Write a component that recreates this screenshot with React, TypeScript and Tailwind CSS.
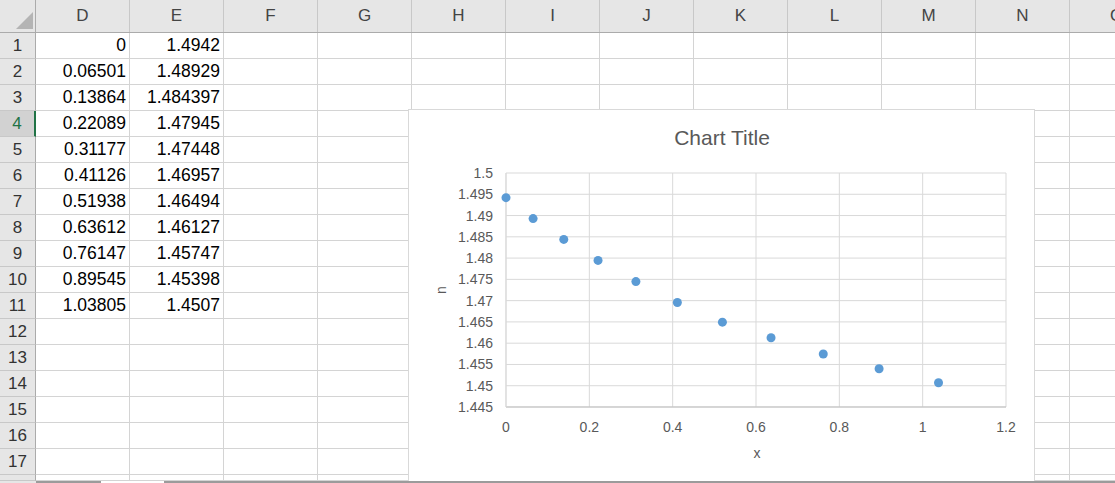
import React from "react";

const columns = ["D", "E", "F", "G", "H", "I", "J", "K", "L", "M", "N", "O"];

// values in columns D and E, rows 1..11
const data: [string, string][] = [
  ["0", "1.4942"],
  ["0.06501", "1.48929"],
  ["0.13864", "1.484397"],
  ["0.22089", "1.47945"],
  ["0.31177", "1.47448"],
  ["0.41126", "1.46957"],
  ["0.51938", "1.46494"],
  ["0.63612", "1.46127"],
  ["0.76147", "1.45747"],
  ["0.89545", "1.45398"],
  ["1.03805", "1.4507"],
];

const SELECTED_ROW = 4;

const HeaderRow = () => (
  <div className="flex h-[33px] shrink-0 bg-[#e6e6e6] border-b border-[#ababab]">
    <div className="relative w-[36px] shrink-0 border-r border-[#ababab]">
      <svg className="absolute left-0 top-0" width="36" height="32">
        <polygon points="16,29 33,29 33,12" fill="#b4b4b4" />
      </svg>
    </div>
    {columns.map((c) => (
      <div
        key={c}
        className="w-[94px] shrink-0 border-r border-[#c8c8c8] flex items-center justify-center text-[17px] text-[#444]"
      >
        {c}
      </div>
    ))}
  </div>
);

const Row = ({ n, height = 26 }: { n: number; height?: number }) => {
  const vals = data[n - 1];
  const selected = n === SELECTED_ROW;
  return (
    <div className="flex shrink-0" style={{ height }}>
      <div
        className={
          selected
            ? "w-[36px] shrink-0 bg-[#d2d2d2] border-r-2 border-[#217346] border-b border-b-[#c8c8c8] flex items-center justify-center text-[17px] text-[#217346]"
            : "w-[36px] shrink-0 bg-[#e6e6e6] border-r border-[#ababab] border-b border-b-[#c8c8c8] flex items-center justify-center text-[17px] text-[#333]"
        }
      >
        {height >= 20 ? n : ""}
      </div>
      {columns.map((c, i) => (
        <div
          key={c}
          className="w-[94px] shrink-0 border-r border-b border-[#d4d4d4] flex items-center justify-end pr-[3px] text-[17.5px] text-black"
        >
          {vals && i < 2 ? vals[i] : ""}
        </div>
      ))}
    </div>
  );
};

// chart geometry (relative to chart box)
const PL = 97;
const PT = 63;
const PR = 597;
const PB = 297;
const xs = (x: number) => PL + (x / 1.2) * (PR - PL);
const ys = (y: number) => PB - ((y - 1.445) / 0.055) * (PB - PT);

const yTicks = ["1.445", "1.45", "1.455", "1.46", "1.465", "1.47", "1.475", "1.48", "1.485", "1.49", "1.495", "1.5"];
const xTicks = ["0", "0.2", "0.4", "0.6", "0.8", "1", "1.2"];

const Chart = () => (
  <div className="absolute left-[408px] top-[109px] w-[627px] h-[372px] bg-white border border-b-0 border-[#d9d9d9]">
    <svg width="625" height="372" className="block" style={{ fontFamily: '"Liberation Sans", Arial, sans-serif' }}>
      <text x="313" y="35" textAnchor="middle" fontSize="21" fill="#595959">
        Chart Title
      </text>
      {yTicks.map((t) => {
        const y = ys(parseFloat(t));
        return (
          <g key={t}>
            <line x1={PL} x2={PR} y1={y} y2={y} stroke="#d9d9d9" strokeWidth="1" />
            <text x={PL - 13} y={y + 5} textAnchor="end" fontSize="14" fill="#595959">
              {t}
            </text>
          </g>
        );
      })}
      {xTicks.map((t) => {
        const x = xs(parseFloat(t));
        return (
          <g key={t}>
            <line x1={x} x2={x} y1={PT} y2={PB} stroke="#d9d9d9" strokeWidth="1" />
            <text x={x} y={PB + 25} textAnchor="middle" fontSize="14" fill="#595959">
              {t}
            </text>
          </g>
        );
      })}
      <line x1={PL} x2={PR} y1={PB} y2={PB} stroke="#bfbfbf" strokeWidth="1" />
      <line x1={PL} x2={PL} y1={PT} y2={PB} stroke="#d9d9d9" strokeWidth="1" />
      {data.map(([x, y]) => (
        <circle key={x} cx={xs(parseFloat(x))} cy={ys(parseFloat(y))} r="4.5" fill="#5b9bd5" />
      ))}
      <text x="348" y="348" textAnchor="middle" fontSize="14" fill="#595959">
        x
      </text>
      <text x="0" y="0" textAnchor="middle" fontSize="14" fill="#595959" transform="translate(37 180) rotate(-90)">
        n
      </text>
    </svg>
  </div>
);

export default function App() {
  const rows = Array.from({ length: 17 }, (_, i) => i + 1);
  return (
    <div
      className="relative w-[1115px] h-[483px] overflow-hidden bg-white"
      style={{ fontFamily: '"Liberation Sans", Arial, sans-serif' }}
    >
      <div className="flex flex-col">
        <HeaderRow />
        {rows.map((n) => (
          <Row key={n} n={n} />
        ))}
        <Row n={18} height={6} />
      </div>
      <Chart />
      {/* bottom edge: sheet tab strip */}
      <div className="absolute left-0 bottom-0 w-full h-[2px] flex">
        <div className="w-[36px] bg-[#e6e6e6]" />
        <div className="w-[65px] bg-[#9b9b9b]" />
        <div className="w-[63px] bg-white" />
        <div className="flex-1 bg-[#9b9b9b]" />
      </div>
    </div>
  );
}
